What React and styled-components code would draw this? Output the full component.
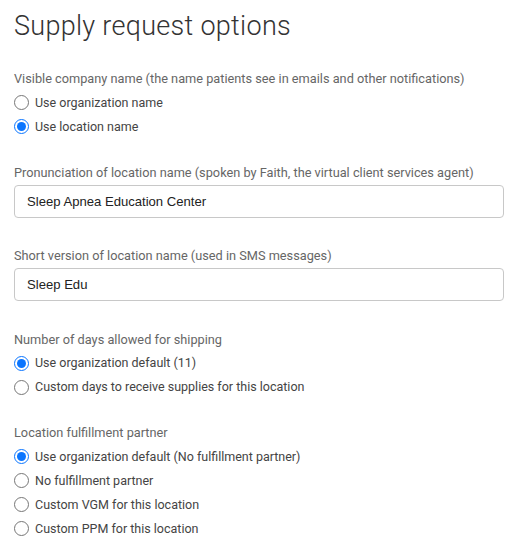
import React from "react";
import styled, { createGlobalStyle } from "styled-components";

const GlobalStyle = createGlobalStyle`
  body {
    margin: 0;
    background: #fff;
    font-family: Roboto, "Liberation Sans", Arial, sans-serif;
  }
`;

const sections = [
  {
    kind: "radio",
    name: "company",
    label: "Visible company name (the name patients see in emails and other notifications)",
    options: ["Use organization name", "Use location name"],
    checked: 1,
  },
  {
    kind: "input",
    label: "Pronunciation of location name (spoken by Faith, the virtual client services agent)",
    value: "Sleep Apnea Education Center",
  },
  {
    kind: "input",
    label: "Short version of location name (used in SMS messages)",
    value: "Sleep Edu",
  },
  {
    kind: "radio",
    name: "days",
    label: "Number of days allowed for shipping",
    options: ["Use organization default (11)", "Custom days to receive supplies for this location"],
    checked: 0,
  },
  {
    kind: "radio",
    name: "partner",
    label: "Location fulfillment partner",
    options: [
      "Use organization default (No fulfillment partner)",
      "No fulfillment partner",
      "Custom VGM for this location",
      "Custom PPM for this location",
    ],
    checked: 0,
  },
];

const App = () => {
  return (
    <Page>
      <GlobalStyle />
      <Title>Supply request options</Title>
      {sections.map((s) => (
        <Section key={s.label} $kind={s.kind}>
          <Label $kind={s.kind}>{s.label}</Label>
          {s.kind === "input" ? (
            <TextInput defaultValue={s.value} />
          ) : (
            <Options>
              {s.options.map((o, i) => (
                <Option key={o}>
                  <Radio type="radio" name={s.name} defaultChecked={i === s.checked} />
                  <span>{o}</span>
                </Option>
              ))}
            </Options>
          )}
        </Section>
      ))}
    </Page>
  );
};

export default App;

const Page = styled.div`
  width: 490px;
  padding: 9px 0 0 14px;
  display: flex;
  flex-direction: column;
`;

const Title = styled.h1`
  margin: 0 0 27px;
  font-size: 27px;
  font-weight: 300;
  color: #333;
  line-height: 34px;
  letter-spacing: 0.3px;
`;

const Section = styled.div`
  display: flex;
  flex-direction: column;
  margin-bottom: ${(p) => (p.$kind === "input" ? "29.5px" : "28px")};
`;

const Label = styled.div`
  font-size: 12.75px;
  color: #666;
  line-height: 18px;
  margin-bottom: ${(p) => (p.$kind === "input" ? "3px" : "5.5px")};
`;

const Options = styled.div`
  display: flex;
  flex-direction: column;
  gap: 6px;
`;

const Option = styled.label`
  display: flex;
  align-items: center;
  gap: 6px;
  font-size: 12.5px;
  color: #444;
  line-height: 18px;
`;

const Radio = styled.input`
  width: 15px;
  height: 15px;
  margin: 0;
  accent-color: #0a75ff;
`;

const TextInput = styled.input`
  box-sizing: border-box;
  width: 490px;
  height: 33px;
  padding: 0 12px;
  border: 1px solid #c8c8c8;
  border-radius: 4px;
  font-family: "Liberation Sans", Arial, sans-serif;
  font-size: 13.1px;
  color: #222;
  outline: none;
`;
